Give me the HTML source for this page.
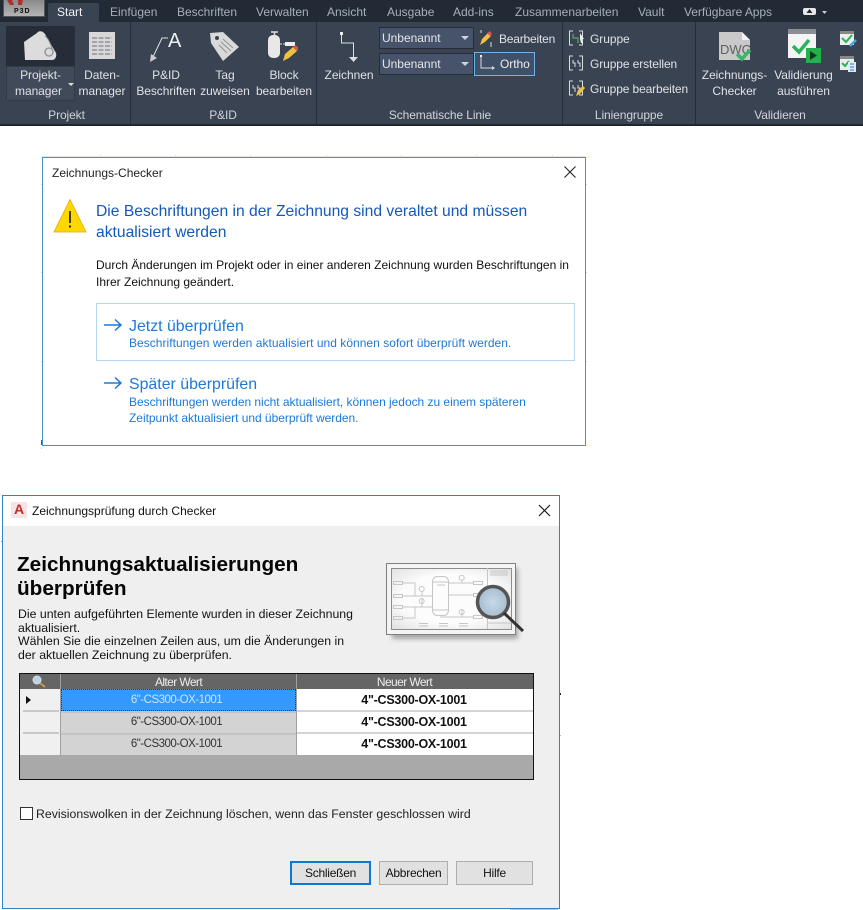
<!DOCTYPE html>
<html lang="de"><head><meta charset="utf-8"><title>Zeichnungs-Checker</title>
<style>
html,body{margin:0;padding:0;background:#fff}
body{width:863px;height:910px;position:relative;overflow:hidden;font-family:"Liberation Sans",sans-serif}
.a{position:absolute;white-space:nowrap}
.r{color:#dfe2e6;font-size:12px;line-height:16px;text-align:center;letter-spacing:-.06px}
.t{color:#a6afbb;font-size:12px;line-height:16px;top:4px}
.l{color:#d0d4da;font-size:12px;line-height:16px;text-align:center;top:107px;letter-spacing:-.1px}
.sep{position:absolute;top:22px;width:1px;height:103px;background:#252c37}
.combo{position:absolute;left:379px;width:93px;height:20px;background:#47536a;border:1px solid #262d38;color:#e4e7ea;font-size:12px;line-height:20px;text-indent:2px;letter-spacing:-.02px}
.combo:after{content:"";position:absolute;right:4px;top:8px;border:4px solid transparent;border-top:4px solid #d0d4da;border-bottom:0}
.b{color:#1458b8}
.c{color:#1e78d8}
.btn{position:absolute;top:861px;height:24px;box-sizing:border-box;background:#e1e1e1;border:1px solid #adadad;font-size:12px;line-height:22px;text-align:center;color:#111;letter-spacing:-.25px}
.cell{position:absolute;font-size:11.5px;line-height:21px;text-align:center;letter-spacing:-.5px}
.b2{font-weight:bold;font-size:12.5px;letter-spacing:-.25px;color:#111}
.p{position:absolute;left:18px;font-size:12.3px;line-height:14px;color:#111;white-space:nowrap}
.tk{position:absolute;background:#d4d4d4}
</style></head><body>

<!-- Ribbon -->
<div class="a" style="left:0;top:0;width:863px;height:125px;background:#3a4352"></div>
<div class="a" style="left:0;top:0;width:863px;height:22px;background:#222a35"></div>
<div class="a" style="left:0;top:124px;width:863px;height:2px;background:#20262f"></div>
<div class="a" style="left:3px;top:0;width:40px;height:16px;background:linear-gradient(#8a8a8a,#b5b5b5);border:1px solid #555;border-top:0"></div>
<svg class="a" style="left:6px;top:0" width="20" height="6"><path d="M1 0h5l2 5H4zM12 0h5l-1 5h-4z" fill="#a8322c"/></svg>
<div class="a" style="left:14px;top:7px;font-size:7px;line-height:9px;font-weight:bold;letter-spacing:1px;color:#111">P3D</div>
<div class="a" style="left:48px;top:3px;width:51px;height:19px;background:#3a4352;border-radius:2px 2px 0 0"></div>
<div class="a t" style="left:57px;color:#f2f3f5">Start</div>
<div class="a t" style="left:110px">Einfügen</div>
<div class="a t" style="left:177px">Beschriften</div>
<div class="a t" style="left:256px">Verwalten</div>
<div class="a t" style="left:327px">Ansicht</div>
<div class="a t" style="left:387px">Ausgabe</div>
<div class="a t" style="left:453px">Add-ins</div>
<div class="a t" style="left:515px">Zusammenarbeiten</div>
<div class="a t" style="left:638px">Vault</div>
<div class="a t" style="left:684px;letter-spacing:-.05px">Verfügbare Apps</div>
<svg class="a" style="left:800px;top:5px" width="30" height="14"><rect x="3" y="3" width="13" height="7" rx="2" fill="#e8e8e8"/><path d="M9.500 4l3 4h-6z" fill="#222a35"/><path d="M22 6h5l-2.500 3z" fill="#ccc"/></svg>

<div class="sep" style="left:130px"></div><div class="sep" style="left:316px"></div><div class="sep" style="left:562px"></div><div class="sep" style="left:695px"></div>

<div class="a" style="left:6px;top:26px;width:69px;height:40px;background:#262d39"></div>
<div class="a" style="left:6px;top:66px;width:69px;height:35px;background:#404a5a;box-shadow:inset 0 0 0 1px #333b49"></div>
<svg class="a" style="left:20px;top:28px" width="40" height="36"><path d="M4 14L17 5c1-2 5-3 8 1l11 19c1 4-1 7-4 7H5z" fill="#dcdcdc"/><path d="M25 8c3 2 6 8 7 13" stroke="#8a8f96" fill="none"/><circle cx="29" cy="24" r="4" fill="none" stroke="#8a8f96" stroke-width="1.300"/></svg>
<div class="a r" style="left:6px;top:67px;width:69px">Projekt-</div>
<div class="a r" style="left:4px;top:83px;width:69px">manager</div>
<div class="a" style="left:68px;top:83px;border:3px solid transparent;border-top:3px solid #ddd;border-bottom:0"></div>
<svg class="a" style="left:89px;top:32px" width="26" height="27"><rect width="26" height="27" fill="#d8d8d8"/><path d="M3 6h20M3 10h20M3 14h20M3 18h20M3 22h20" stroke="#8f9297" stroke-width="1.500" stroke-dasharray="5 1.500"/></svg>
<div class="a r" style="left:75px;top:67px;width:54px">Daten-</div>
<div class="a r" style="left:75px;top:83px;width:54px">manager</div>
<div class="a l" style="left:6px;width:121px;">Projekt</div>

<svg class="a" style="left:148px;top:30px" width="36" height="33"><path d="M20 8h-6L5 27" fill="none" stroke="#ddd"/><path d="M2 32l1-8 6 4z" fill="#ccc"/><text x="20" y="17" font-size="20" fill="#eee" font-family="Liberation Sans">A</text></svg>
<div class="a r" style="left:136px;top:67px;width:60px">P&amp;ID</div>
<div class="a r" style="left:134px;top:83px;width:64px">Beschriften</div>
<svg class="a" style="left:209px;top:29px" width="32" height="33"><path d="M1 4l13-1 16 15-16 14L2 14z" fill="#d9d9d9"/><circle cx="8" cy="9" r="2" fill="#3a4352"/><path d="M14 10l10 9M12 13l10 9M10 16l8 8" stroke="#8f9297"/></svg>
<div class="a r" style="left:196px;top:67px;width:58px">Tag</div>
<div class="a r" style="left:197px;top:83px;width:56px">zuweisen</div>
<svg class="a" style="left:267px;top:30px" width="32" height="33"><path d="M4 2h7M7.500 2v4" stroke="#ddd" stroke-width="1.500"/><rect x="1" y="5" width="12" height="23" rx="5" fill="#e8e8e8"/><path d="M13 14h5" stroke="#ddd" stroke-dasharray="2 1"/><rect x="18" y="12" width="10" height="4" fill="#eee"/><path d="M16 31l2-7 8-7 4 4-8 7z" fill="#f0c040"/><path d="M26 17l2-2 3 2 0 3-1 1z" fill="#e05050"/></svg>
<div class="a r" style="left:254px;top:67px;width:60px">Block</div>
<div class="a r" style="left:254px;top:83px;width:60px">bearbeiten</div>
<div class="a l" style="left:190px;width:66px">P&amp;ID</div>

<svg class="a" style="left:336px;top:30px" width="24" height="33"><rect x="4" y="2" width="3" height="3" fill="#eee"/><path d="M5.500 5v8h12v14" fill="none" stroke="#ddd"/><path d="M13 27h9l-4.500 5z" fill="#ddd"/></svg>
<div class="a r" style="left:320px;top:67px;width:58px">Zeichnen</div>
<div class="combo" style="top:27px">Unbenannt</div>
<div class="combo" style="top:53px">Unbenannt</div>
<svg class="a" style="left:478px;top:29px" width="16" height="20"><path d="M3 1v3M13 13v5" stroke="#ddd"/><path d="M2 16l2-6 6-6 3 3-6 6z" fill="#f0c040"/><path d="M9 4l3-2 2 3-2 2z" fill="#e05050"/></svg>
<div class="a r" style="left:499px;top:31px;letter-spacing:-.2px">Bearbeiten</div>
<div class="a" style="left:474px;top:52px;width:59px;height:22px;border:1px solid #6db3e8;background:#3f5068"></div>
<svg class="a" style="left:478px;top:54px" width="18" height="18"><rect x="2" y="1" width="2" height="2" fill="#eee"/><path d="M3 3v11h12" fill="none" stroke="#ddd"/><path d="M14 12l3 2-3 2z" fill="#ddd"/></svg>
<div class="a r" style="left:500px;top:56px;color:#eee">Ortho</div>
<div class="a l" style="left:386px;width:108px">Schematische Linie</div>

<svg class="a" style="left:568px;top:30px" width="18" height="68" fill="none" stroke="#d8dce0"><path d="M5 1H1.500v14H5M11 1h3.500v14H11"/><path d="M5 4v4h5v5" stroke="#5cc06a"/><path d="M12 3l4 6-2 0 1 4-2 0-1-4z" fill="#eee" stroke="none"/><path d="M5 26H1.500v14H5M11 26h3.500v14H11M5 30v3h2v4M10 30v3h2v4"/><path d="M5 51H1.500v14H5M11 51h3.500v14H11M5 55v3h2v4M10 55v3h2v4"/><path d="M8 66l2-6 5-4 2 2-5 6z" fill="#f0c040" stroke="none"/></svg>
<div class="a r" style="left:590px;top:31px">Gruppe</div>
<div class="a r" style="left:590px;top:56px;letter-spacing:-.1px">Gruppe erstellen</div>
<div class="a r" style="left:590px;top:81px;letter-spacing:-.12px">Gruppe bearbeiten</div>
<div class="a l" style="left:594px;width:70px">Liniengruppe</div>

<svg class="a" style="left:718px;top:30px" width="36" height="34"><path d="M1 2h23l8 8v20H1z" fill="#c9c9c9"/><path d="M24 2v8h8z" fill="#f2f2f2"/><text x="2" y="24" font-size="13" fill="#5e5e5e" font-family="Liberation Sans">DWG</text><path d="M19 24l5 5 8-9" fill="none" stroke="#38b56a" stroke-width="3.500"/></svg>
<div class="a r" style="left:698px;top:67px;width:73px">Zeichnungs-</div>
<div class="a r" style="left:698px;top:83px;width:73px">Checker</div>
<svg class="a" style="left:788px;top:29px" width="34" height="36"><rect width="28" height="29" fill="#f4f4f4"/><rect width="28" height="5" fill="#8b8f95"/><path d="M5 17l6 6 10-12" fill="none" stroke="#29b45a" stroke-width="3.500"/><rect x="18" y="19" width="15" height="15" fill="#22b14c"/><path d="M22 22v9l7-4.500z" fill="#0c3b1c"/></svg>
<div class="a r" style="left:771px;top:67px;width:65px">Validierung</div>
<div class="a r" style="left:771px;top:83px;width:65px">ausführen</div>
<svg class="a" style="left:840px;top:30px" width="18" height="44"><rect y="1" width="14" height="14" fill="#eee"/><rect y="1" width="14" height="3" fill="#888"/><path d="M2 8l4 4 6-7" fill="none" stroke="#29b45a" stroke-width="2"/><path d="M10 16l6-6" stroke="#4aa3e0" stroke-width="2.500"/><rect y="26" width="14" height="14" fill="#eee"/><rect y="26" width="14" height="3" fill="#888"/><path d="M2 33l3 3 4-5" fill="none" stroke="#29b45a" stroke-width="2"/><rect x="8" y="32" width="8" height="10" fill="#dcebf8"/><path d="M10 34h4M10 37h4M10 40h4" stroke="#2f7cc0"/></svg>
<div class="a l" style="left:753px;width:54px">Validieren</div>

<!-- Ticks behind dialog 1 -->
<div class="tk" style="left:100px;top:155px;width:1px;height:2px"></div><div class="tk" style="left:175px;top:155px;width:1px;height:2px"></div><div class="tk" style="left:250px;top:155px;width:1px;height:2px"></div><div class="tk" style="left:326px;top:155px;width:1px;height:2px"></div><div class="tk" style="left:401px;top:155px;width:1px;height:2px"></div><div class="tk" style="left:476px;top:155px;width:1px;height:2px"></div><div class="tk" style="left:552px;top:155px;width:1px;height:2px"></div>
<div class="a" style="left:42px;top:156px;width:544px;height:1px;background:#e6e6e6"></div>
<div class="tk" style="left:41px;top:184px;width:1px;height:1px"></div><div class="tk" style="left:41px;top:272px;width:1px;height:1px"></div><div class="tk" style="left:41px;top:361px;width:1px;height:1px"></div><div class="tk" style="left:41px;top:448px;width:1px;height:1px"></div>
<div class="tk" style="left:586px;top:184px;width:1px;height:1px"></div><div class="tk" style="left:586px;top:272px;width:1px;height:1px"></div><div class="tk" style="left:586px;top:361px;width:1px;height:1px"></div>
<div class="a" style="left:41px;top:440px;width:1px;height:5px;background:#555"></div>

<!-- First dialog -->
<div class="a" style="left:42px;top:157px;width:544px;height:289px;box-sizing:border-box;background:#fff;border:1px solid #4a90c8"></div>
<div class="a" style="left:52px;top:165px;font-size:12px;line-height:16px;color:#222">Zeichnungs-Checker</div>
<svg class="a" style="left:563px;top:165px" width="14" height="14"><path d="M1.500 1.500l11 11M12.500 1.500l-11 11" stroke="#222" stroke-width="1.100"/></svg>
<svg class="a" style="left:53px;top:198px" width="35" height="35"><path d="M17 1.500L33 34H1z" fill="#ffd800" stroke="#e8a800" stroke-width=".8"/><path d="M17 13v12" stroke="#111" stroke-width="1.600"/><circle cx="17" cy="28.500" r="1.100" fill="#111"/></svg>
<div class="a b" style="left:96px;top:201px;font-size:15.65px;line-height:21px;">Die Beschriftungen in der Zeichnung sind veraltet und müssen</div>
<div class="a b" style="left:96px;top:222px;font-size:15.65px;line-height:21px">aktualisiert werden</div>
<div class="a" style="left:96px;top:257px;font-size:12px;line-height:16px;color:#111">Durch Änderungen im Projekt oder in einer anderen Zeichnung wurden Beschriftungen in</div>
<div class="a" style="left:96px;top:274px;font-size:12px;line-height:16px;color:#111">Ihrer Zeichnung geändert.</div>
<div class="a" style="left:96px;top:303px;width:479px;height:58px;box-sizing:border-box;border:1px solid #b5d7ee"></div>
<svg class="a" style="left:104px;top:318px" width="20" height="14"><path d="M0 7h17M11 1.500L17 7l-6 5.500" fill="none" stroke="#1e78d8" stroke-width="1.500"/></svg>
<div class="a c" style="left:129px;top:317px;font-size:15.9px;line-height:20px">Jetzt überprüfen</div>
<div class="a c" style="left:129px;top:335px;font-size:12px;line-height:16px;letter-spacing:.03px">Beschriftungen werden aktualisiert und können sofort überprüft werden.</div>
<svg class="a" style="left:104px;top:376px" width="20" height="14"><path d="M0 7h17M11 1.500L17 7l-6 5.500" fill="none" stroke="#1e78d8" stroke-width="1.500"/></svg>
<div class="a c" style="left:129px;top:375px;font-size:15.9px;line-height:20px">Später überprüfen</div>
<div class="a c" style="left:129px;top:394px;font-size:12px;line-height:16px;letter-spacing:-.03px">Beschriftungen werden nicht aktualisiert, können jedoch zu einem späteren</div>
<div class="a c" style="left:129px;top:410px;font-size:12px;line-height:16px;letter-spacing:-.03px">Zeitpunkt aktualisiert und überprüft werden.</div>

<!-- Ticks around dialog 2 -->
<div class="a" style="left:1px;top:541px;width:1px;height:1px;background:#999"></div>
<div class="a" style="left:560px;top:693px;width:1px;height:2px;background:#222"></div>
<div class="a" style="left:560px;top:735px;width:1px;height:1px;background:#bbb"></div>
<div class="a" style="left:510px;top:909px;width:48px;height:1px;background:#c0c6cc"></div>

<!-- Second dialog -->
<div class="a" style="left:2px;top:495px;width:558px;height:414px;box-sizing:border-box;background:#efefef;border:1px solid #2f84c8"></div>
<div class="a" style="left:3px;top:496px;width:556px;height:30px;background:#fff"></div>
<div class="a" style="left:11px;top:502px;width:16px;height:16px;background:#f6e4e2;color:#c0302c;font-size:14px;line-height:15px;font-weight:bold;text-align:center">A</div>
<div class="a" style="left:32px;top:503px;font-size:12px;line-height:16px;color:#111">Zeichnungsprüfung durch Checker</div>
<svg class="a" style="left:538px;top:504px" width="13" height="13"><path d="M1 1l11 11M12 1L1 12" stroke="#111" stroke-width="1.100"/></svg>
<div class="a" style="left:17px;top:552px;font-size:20.75px;line-height:25px;font-weight:bold;color:#050505">Zeichnungsaktualisierungen</div>
<div class="a" style="left:17px;top:576px;font-size:20.75px;line-height:25px;font-weight:bold;color:#050505">überprüfen</div>
<div class="p" style="top:607px">Die unten aufgeführten Elemente wurden in dieser Zeichnung</div>
<div class="p" style="top:621px">aktualisiert.</div>
<div class="p" style="top:634px">Wählen Sie die einzelnen Zeilen aus, um die Änderungen in</div>
<div class="p" style="top:648px">der aktuellen Zeichnung zu überprüfen.</div>

<svg class="a" style="left:384px;top:560px" width="146" height="84">
<defs><filter id="f" x="-10%" y="-10%" width="125%" height="125%"><feGaussianBlur stdDeviation="2.500"/></filter><radialGradient id="g" r=".8"><stop offset=".5" stop-color="#fcfcfc"/><stop offset="1" stop-color="#d8d8d8"/></radialGradient><radialGradient id="m"><stop offset="0" stop-color="#c6daee"/><stop offset="1" stop-color="#a8bccd"/></radialGradient></defs>
<rect x="8" y="8" width="126" height="71" fill="#777" opacity=".6" filter="url(#f)"/>
<rect x="2.500" y="3.500" width="129" height="71" fill="#f4f4f4" stroke="#7f7f7f"/>
<rect x="7.500" y="8.500" width="120" height="61" fill="url(#g)" stroke="#8d8d8d"/>
<g fill="none" stroke="#c6c6c6"><path d="M103.500 8v61M103.500 63h24M106 11h18M106 13h18M106 15h18"/><rect x="48.500" y="16.500" width="16" height="39" rx="5"/><path d="M48 22h16M48 50h16M53 25h8"/><path d="M19 23h12v13M19 36h29M19 47h29M19 58h12v-11M64 23h25M64 35h25M56 57h33M78 20v3M78 49v8M38 31v5M38 39v8"/><rect x="9.500" y="21.500" width="9" height="3"/><rect x="9.500" y="34.500" width="9" height="3"/><rect x="9.500" y="45.500" width="9" height="3"/><rect x="9.500" y="56.500" width="9" height="3"/><rect x="89.500" y="21.500" width="9" height="3"/><rect x="89.500" y="33.500" width="9" height="3"/><rect x="89.500" y="55.500" width="9" height="3"/><circle cx="37.700" cy="29" r="2.500"/><circle cx="37.700" cy="41" r="2.500"/><circle cx="77.700" cy="17.700" r="2.500"/><circle cx="77.700" cy="52" r="2.500"/><path d="M35 63.500h9M35 66h9M55 63.500h9M55 66h9M75 63.500h9M75 66h9"/></g>
<circle cx="109" cy="42" r="15.500" fill="url(#m)" stroke="#555" stroke-width="3.500"/>
<path d="M120 53l19 18" stroke="#333" stroke-width="3"/>
</svg>

<!-- Grid -->
<div class="a" style="left:19px;top:673px;width:515px;height:107px;box-sizing:border-box;background:#a9a9a9;border:1px solid #111"></div>
<div class="a" style="left:20px;top:674px;width:513px;height:15px;background:#656565"></div>
<div class="a" style="left:60px;top:674px;width:1px;height:81px;background:#a0a0a0"></div>
<div class="a" style="left:296px;top:674px;width:1px;height:81px;background:#a0a0a0"></div>
<svg class="a" style="left:30px;top:674px" width="18" height="15"><circle cx="7" cy="6" r="4" fill="#b8d4ec" stroke="#ddd"/><path d="M10 9l5 4" stroke="#c49a4a" stroke-width="2"/></svg>
<div class="a" style="left:61px;top:675px;width:235px;color:#eee;font-size:12px;line-height:15px;text-align:center;letter-spacing:-.6px">Alter Wert</div>
<div class="a" style="left:297px;top:675px;width:215px;color:#eee;font-size:12px;line-height:15px;text-align:center;letter-spacing:-.6px">Neuer Wert</div>
<div class="a" style="left:20px;top:689px;width:40px;height:66px;background:#f0f0f0"></div>
<div class="a" style="left:23px;top:710px;width:36px;height:2px;background:#c8c8c8"></div>
<div class="a" style="left:23px;top:732px;width:36px;height:2px;background:#c8c8c8"></div>
<div class="a" style="left:26px;top:696px;border:4px solid transparent;border-left:5px solid #111;border-right:0"></div>
<div class="a" style="left:61px;top:689px;width:235px;height:66px;background:#d3d3d3"></div>
<div class="a" style="left:61px;top:689px;width:235px;height:22px;box-sizing:border-box;background:#3399ff;border:1px dotted #0a3a7a"></div>
<div class="a" style="left:61px;top:711px;width:235px;height:2px;background:#c4c4c4"></div>
<div class="a" style="left:61px;top:733px;width:235px;height:2px;background:#c4c4c4"></div>
<div class="a" style="left:297px;top:689px;width:236px;height:66px;background:#fff"></div>
<div class="a" style="left:297px;top:710px;width:236px;height:2px;background:#d4d4d4"></div>
<div class="a" style="left:297px;top:732px;width:236px;height:2px;background:#d4d4d4"></div>
<div class="cell" style="left:59px;top:690px;width:235px;color:#cfe4fa">6"-CS300-OX-1001</div>
<div class="cell" style="left:59px;top:712px;width:235px;color:#333">6"-CS300-OX-1001</div>
<div class="cell" style="left:59px;top:734px;width:235px;color:#333">6"-CS300-OX-1001</div>
<div class="cell b2" style="left:296px;top:690px;width:236px">4"-CS300-OX-1001</div>
<div class="cell b2" style="left:296px;top:712px;width:236px">4"-CS300-OX-1001</div>
<div class="cell b2" style="left:296px;top:734px;width:236px">4"-CS300-OX-1001</div>

<div class="a" style="left:20px;top:807px;width:13px;height:13px;box-sizing:border-box;background:#fff;border:1px solid #333"></div>
<div class="a" style="left:36px;top:806px;font-size:12.3px;line-height:16px;color:#222">Revisionswolken in der Zeichnung löschen, wenn das Fenster geschlossen wird</div>

<div class="btn" style="left:290px;width:81px;border:2px solid #0a78d4;line-height:20px">Schließen</div>
<div class="btn" style="left:379px;width:69px">Abbrechen</div>
<div class="btn" style="left:456px;width:77px">Hilfe</div>
</body></html>
